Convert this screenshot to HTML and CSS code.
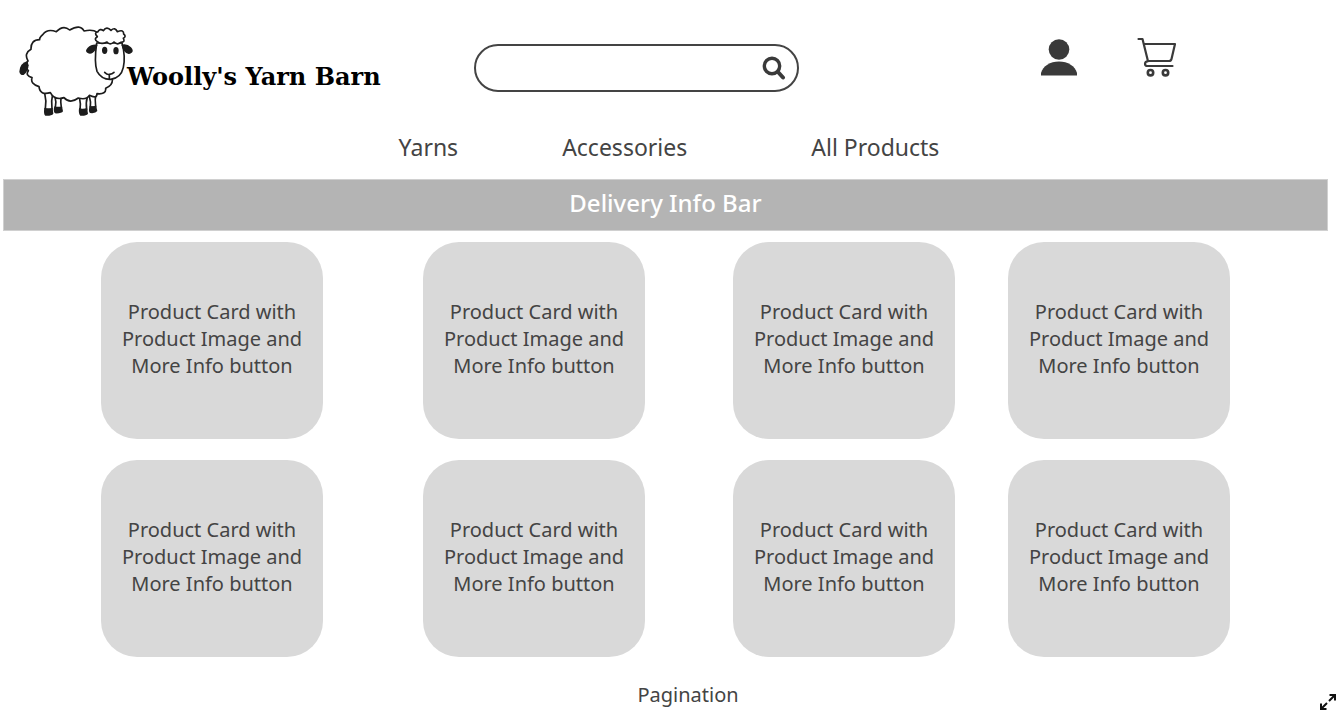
FILE: index.html
```html
<!DOCTYPE html>
<html lang="en">
<head>
<meta charset="utf-8">
<meta name="viewport" content="width=device-width, initial-scale=1">
<title>Woolly's Yarn Barn</title>
<link rel="stylesheet" href="styles.css">
</head>
<body>
<header class="header">
  <a class="logo" href="#">
    <svg class="logo-sheep" viewBox="24 15 348 282" aria-hidden="true">
      <g fill="#fff" stroke="#1c1c1c" stroke-width="5" stroke-linejoin="round" stroke-linecap="round">
        <path d="M104 222Q110 245 106 270H126Q123 245 128 225M135 234Q140 250 136 266H154Q151 250 153 236M209 240Q213 255 210 272H230Q227 250 232 234M238 232Q243 248 241 264H257Q254 240 258 222"/>
        <path d="M262 40Q248 30 222 36Q211 14 179 33Q160 16 139 38Q112 28 99 46Q87 56 89 62Q62 62 63 91Q41 103 54 126Q40 142 55 155Q45 170 66 176Q60 195 87 203Q90 230 121 221Q134 245 162 236Q180 256 205 237Q229 244 238 229Q261 240 261 224Q289 227 287 208Q309 199 307 181L300 80Z"/>
        <path d="M260 72Q252 130 261 157Q275 182 302 181Q333 177 340 145Q347 112 336 72Z"/>
        <path d="M262 68Q250 60 262 53Q251 41 263 39Q270 27 280 35Q290 20 303 34Q315 23 322 38Q342 30 341 45Q350 52 340 58Q347 70 332 70Q322 79 312 69Q300 80 291 69Q274 78 262 68Z"/>
        <path fill="none" d="M284 160Q292 168 298 166Q307 165 312 160M298 166V180"/>
      </g>
      <g fill="#1c1c1c">
        <path d="M263 77Q245 74 233 86Q223 97 233 102Q245 109 257 92ZM334 77Q351 72 363 85Q373 96 364 102Q352 110 340 94Z"/>
        <ellipse cx="284" cy="94" rx="8" ry="11"/>
        <ellipse cx="318" cy="95" rx="8" ry="11"/>
        <path d="M52 126Q30 132 28 158Q30 169 41 168Q54 159 56 139Z"/>
        <path d="M103 266Q116 274 128 266L130 284Q125 291 106 290Q100 285 103 266ZM133 262Q145 269 156 262L159 277Q155 284 135 283Q129 278 133 262ZM207 267Q219 273 231 266L234 284Q229 291 211 290Q205 284 207 267ZM239 260Q248 266 258 259L262 276Q257 284 240 282Q234 277 239 260Z"/>
      </g>
    </svg>
    <span class="logo-name">Woolly's Yarn Barn</span>
  </a>
  <form class="search" role="search">
    <input class="search-input" type="search" aria-label="Search products">
    <button class="search-button" type="button" aria-label="Search">
      <svg width="24" height="24" viewBox="0 0 24 24" fill="none" stroke="#3a3a3a" stroke-linecap="round" aria-hidden="true"><circle cx="10" cy="10" r="7.7" stroke-width="3.4"/><path d="M16 16L21 21.500" stroke-width="4"/></svg>
    </button>
  </form>
  <div class="actions">
    <a class="action" href="#" aria-label="Account">
      <svg width="36" height="37" viewBox="0 0 36 37" fill="#3a3a3a" aria-hidden="true"><circle cx="18" cy="10.500" r="10.300"/><path d="M0 36.500V34C2 27 9 22.500 18 22.500S34 27 36 34V36.500Z"/></svg>
    </a>
    <a class="action" href="#" aria-label="Cart">
      <svg width="40" height="40" viewBox="0 0 40 40" fill="none" stroke="#3a3a3a" stroke-width="2.200" stroke-linecap="round" stroke-linejoin="round" aria-hidden="true"><path d="M1.500 2H5.500L11 24.300M7 7H38L34.500 22Q34 24 32 24H11Q8 24.500 8 27Q8 29 10.500 29H35.500"/><circle cx="13.500" cy="35.700" r="2.700" stroke-width="2.600"/><circle cx="28.500" cy="35.700" r="2.700" stroke-width="2.600"/></svg>
    </a>
  </div>
</header>
<nav class="nav" aria-label="Main">
  <a class="nav-link" href="#">Yarns</a>
  <a class="nav-link" href="#">Accessories</a>
  <a class="nav-link nav-link-all" href="#">All Products</a>
</nav>
<div class="delivery">Delivery Info Bar</div>
<main>
  <div class="products">
    <article class="card">Product Card with Product Image and More Info button</article>
    <article class="card">Product Card with Product Image and More Info button</article>
    <article class="card">Product Card with Product Image and More Info button</article>
    <article class="card">Product Card with Product Image and More Info button</article>
    <article class="card">Product Card with Product Image and More Info button</article>
    <article class="card">Product Card with Product Image and More Info button</article>
    <article class="card">Product Card with Product Image and More Info button</article>
    <article class="card">Product Card with Product Image and More Info button</article>
  </div>
  <div class="pagination">Pagination</div>
</main>
<button class="expand" type="button" aria-label="Full screen">
  <svg width="18" height="18" viewBox="0 0 18 18" fill="none" stroke="#111" stroke-width="2" aria-hidden="true"><path d="M10 8L16 2M10.500 2H16V7.500M8 10L2 16M2 10.500V16H7.500"/></svg>
</button>
</body>
</html>
```
FILE: styles.css
```css
* {
  box-sizing: border-box;
}

body {
  margin: 0;
  background: #fff;
  color: #444;
  font-family: "Noto Sans", sans-serif;
  font-size: 20px;
  line-height: 27px;
}

a {
  color: inherit;
  text-decoration: none;
}

button {
  padding: 0;
  border: 0;
  background: none;
  cursor: pointer;
}

svg {
  display: block;
}

.header {
  display: grid;
  grid-template-columns: 456fr 325fr 539fr;
  align-items: center;
  padding: 24px 0 13px 18px;
}

.logo {
  display: flex;
  align-items: center;
}

.logo-sheep {
  flex: none;
  width: 116px;
  height: 94px;
}

.logo-name {
  margin: 10px 0 0 -7px;
  color: #000;
  font-family: "DejaVu Serif", serif;
  font-size: 24px;
  font-weight: 700;
  white-space: nowrap;
}

.search {
  display: flex;
  align-items: center;
  min-width: 0;
  height: 48px;
  margin-bottom: 6px;
  padding: 0 11px 0 24px;
  border: 2px solid #444;
  border-radius: 24px;
}

.search-input {
  flex: 1;
  width: 0;
  min-width: 0;
  border: 0;
  outline: 0;
  background: none;
  color: inherit;
  font: inherit;
}

.actions {
  display: flex;
  align-items: center;
  gap: 60px;
  padding: 0 0 28px 242px;
}

.nav {
  display: flex;
  justify-content: center;
  gap: 104px;
  padding-bottom: 16px;
  font-size: 23px;
  line-height: 32px;
}

.nav-link-all {
  margin-left: 20px;
}

.delivery {
  margin: 0 10px 0 3px;
  padding: 6px 8px 10px;
  border: 1px solid #d0d0d0;
  background: #b4b4b4;
  color: #fff;
  font-size: 24px;
  font-weight: 500;
  line-height: 34px;
  text-align: center;
}

.products {
  display: grid;
  grid-template-columns: 322fr 310fr 275fr 330fr;
  row-gap: 21px;
  padding: 11px 0 24px 101px;
}

.card {
  display: flex;
  align-items: center;
  width: 222px;
  min-height: 197px;
  padding: 0 20px 4px;
  border-radius: 36px;
  background: #d9d9d9;
  text-align: center;
}

.pagination {
  padding-right: 10px;
  margin-left: 48px;
  text-align: center;
}

.expand {
  position: fixed;
  right: 1px;
  bottom: 12px;
}
```
